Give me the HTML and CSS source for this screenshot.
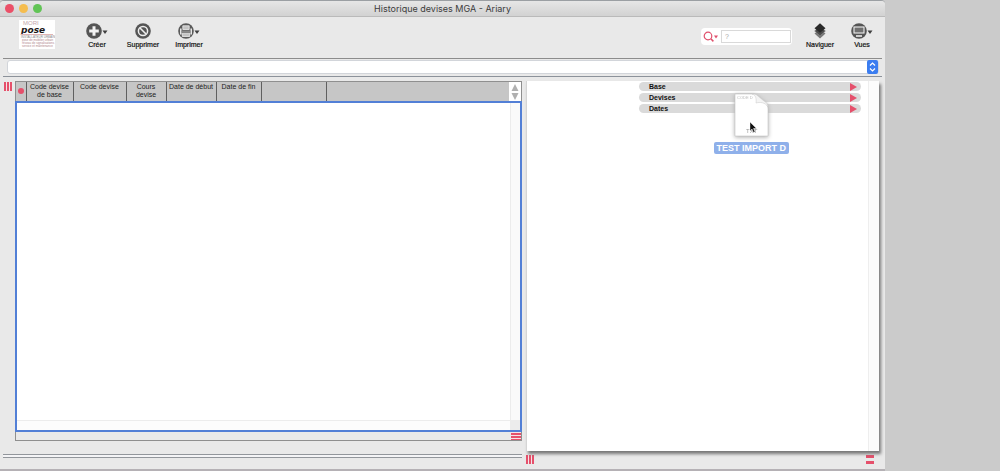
FILE: index.html
```
<!DOCTYPE html>
<html lang="fr">
<head>
<meta charset="utf-8">
<title>Historique devises MGA - Ariary</title>
<link rel="stylesheet" href="styles.css">
</head>
<body>
<main class="window">
  <header class="titlebar">
    <div class="lights">
      <button class="light close" aria-label="Fermer"></button>
      <button class="light minimize" aria-label="Réduire"></button>
      <button class="light maximize" aria-label="Agrandir"></button>
    </div>
    <h1 class="title">Historique devises MGA - Ariary</h1>
  </header>

  <nav class="toolbar">
    <div class="logo">
      <span class="logo-top">MORI</span>
      <span class="logo-name">pose</span>
      <span class="logo-tag">INSTALLATEUR URBAIN</span>
      <span class="logo-line">pose de mobilier urbain</span>
      <span class="logo-line">réseau de signalisations</span>
      <span class="logo-line">service et maintenance</span>
    </div>
    <div class="actions">
      <button class="tool">
        <svg width="24" height="18" viewBox="0 0 24 18"><circle cx="9" cy="9" r="7.8" fill="#555"/><path d="M9 4.200v9.600M4.200 9h9.600" stroke="#f2f2f2" stroke-width="3"/><path d="M17.500 8.500h5L20 12z" fill="#3f3f3f"/></svg>
        <span>Créer</span>
      </button>
      <button class="tool">
        <svg width="24" height="18" viewBox="0 0 24 18"><circle cx="12" cy="9" r="7.800" fill="#555"/><circle cx="12" cy="9" r="4.600" fill="none" stroke="#eee" stroke-width="1.500"/><path d="M9 6l6 6" stroke="#eee" stroke-width="1.600"/></svg>
        <span>Supprimer</span>
      </button>
      <button class="tool">
        <svg width="24" height="18" viewBox="0 0 24 18"><circle cx="9" cy="9" r="7.800" fill="#5a5a5a"/><path d="M5.800 3.800h6.400v3.700H5.800zM5.300 11.200h7.400v3.300H5.300z" fill="#c4c4c4" stroke="#eee" stroke-width=".8"/><path d="M3.800 6.500v6M14.200 6.500v6" stroke="#eee" stroke-width="1.500"/><path d="M4.500 8.500h9v2.200h-9z" fill="#888"/><path d="M17.500 8.500h5L20 12z" fill="#3f3f3f"/></svg>
        <span>Imprimer</span>
      </button>
    </div>
    <div class="search">
      <svg width="16" height="12" viewBox="0 0 16 12"><circle cx="5" cy="5" r="3.800" fill="none" stroke="#e0506c" stroke-width="1.200"/><path d="M7.800 7.800l2.600 2.600" stroke="#e0506c" stroke-width="1.500"/><path d="M11 4.500h4L13 7.500z" fill="#e0506c"/></svg>
      <input class="search-input" type="search" placeholder="?" aria-label="Rechercher">
    </div>
    <div class="actions">
      <button class="tool">
        <svg width="24" height="18" viewBox="0 0 24 18"><path d="M12 7.500l5.500 4L12 16.500l-5.500-5z" fill="#777"/><path d="M12 4.500l5.500 4.500-5.500 4.800L6.500 9z" fill="#4c4c4c" stroke="#999" stroke-width=".4"/><path d="M12 1.200l5.500 5-5.500 4.600-5.500-4.600z" fill="#292929"/></svg>
        <span>Naviguer</span>
      </button>
      <button class="tool">
        <svg width="24" height="18" viewBox="0 0 24 18"><circle cx="9" cy="9" r="7.800" fill="#555"/><rect x="4" y="5" width="10" height="6" fill="#707070" stroke="#eee" stroke-width="1.100"/><path d="M6 14h6" stroke="#eee" stroke-width="1.600"/><path d="M17.500 8.500h5L20 12z" fill="#3f3f3f"/></svg>
        <span>Vues</span>
      </button>
    </div>
  </nav>

  <div class="picker">
    <select class="picker-select" aria-label="Sélection"><option></option></select>
    <svg class="picker-icon" width="11" height="14" viewBox="0 0 11 14"><rect width="11" height="14" rx="2" fill="#3b7df0"/><path d="M3 5.500L5.500 3 8 5.500M3 8.500L5.500 11 8 8.500" fill="none" stroke="#fff" stroke-width="1.200"/></svg>
  </div>

  <div class="panes">
    <span class="grip"></span>
    <section class="list">
      <div class="list-box">
        <div class="list-head">
          <table class="columns">
            <thead>
              <tr>
                <th class="w-mark"><span class="dot"></span></th>
                <th class="w-base">Code devise de base</th>
                <th class="w-code">Code devise</th>
                <th class="w-rate">Cours devise</th>
                <th class="w-start">Date de début</th>
                <th class="w-end">Date de fin</th>
                <th class="w-extra"></th>
              </tr>
            </thead>
          </table>
          <svg class="sorter" width="12" height="19" viewBox="0 0 12 19"><rect width="12" height="19" fill="#fff"/><path d="M6 2l3.500 7h-7zM6 18l3.500-7h-7z" fill="#b0b0b0"/></svg>
        </div>
        <div class="list-body"><div class="rows"></div><div class="track"></div><div class="track-h"></div><div class="corner"></div></div>
        <div class="list-foot"><span class="grip-h"></span></div>
      </div>
      <div class="rules"></div>
    </section>
    <section class="detail">
      <div class="card">
        <div class="groups">
          <button class="group"><span>Base</span><i class="arrow"></i></button>
          <button class="group"><span>Devises</span><i class="arrow"></i></button>
          <button class="group"><span>Dates</span><i class="arrow"></i></button>
        </div>
        <div class="card-track"></div>
        <div class="dragged">
          <svg width="42" height="50" viewBox="0 0 42 50">
            <path class="sheet" d="M5 3h17c5 0 6 3 7 5l5 3c3 2 4 4 4 7v27H5z"/>
            <path d="M22 3c4 1 4.500 5 4 9 4-1 9-1 12 4 0-3-2-5-4-6L28 5c-2-2-4-2-6-2z" fill="#f4f4f4" stroke="#c8c8c8" stroke-width=".5"/>
            <text x="7" y="8" class="sheet-note">CODE D</text>
            <text x="16" y="42" class="sheet-type">TXT</text>
            <path d="M20 31v9l2-2 1.500 3.500 1.500-.8-1.500-3.200h3z" fill="#111" stroke="#fff" stroke-width=".4"/>
          </svg>
          <span class="dragged-name">TEST IMPORT D</span>
        </div>
      </div>
      <div class="detail-foot"><span class="grip-foot"></span><span class="bars"></span></div>
    </section>
  </div>
</main>
</body>
</html>
```
FILE: styles.css
```
* { box-sizing: border-box; }
body {
  margin: 0;
  min-height: 100vh;
  display: flex;
  padding: 0 115px 0 0;
  background: #cbcbcb;
  font-family: "Liberation Sans", Arial, sans-serif;
  font-size: 7px;
  color: #222;
}
button { border: 0; padding: 0; background: none; font: inherit; color: inherit; }
.window {
  flex: 1;
  display: flex;
  flex-direction: column;
  background: #e9e9e9;
  border-top: 1px solid #9b9fa3;
  border-bottom: 2px solid #b5b1b5;
  border-radius: 4px 4px 0 0;
}
.titlebar {
  position: relative;
  height: 16px;
  display: flex;
  align-items: center;
  justify-content: center;
  background: linear-gradient(#e6e6e6, #d2d2d2);
  border-bottom: 1px solid #bababa;
  border-radius: 4px 4px 0 0;
}
.lights { position: absolute; left: 5px; display: flex; gap: 5px; }
.light { width: 9px; height: 9px; border-radius: 50%; }
.close { background: #eb5068; }
.minimize { background: #f5bd4f; }
.maximize { background: #61c455; }
.title { margin: 0; font: 400 9px/15px Inter, "Liberation Sans", sans-serif; color: #3c3c3c; }

.toolbar {
  height: 41px;
  display: flex;
  align-items: flex-start;
  padding: 3px 0 0 19px;
}
.logo {
  width: 36px;
  height: 29px;
  display: flex;
  flex-direction: column;
  background: #fff;
  padding: 1px 2px;
  overflow: hidden;
  white-space: nowrap;
}
.logo-top { padding-left: 2px; font-size: 6px; line-height: 5px; color: #c4a8ab; }
.logo-name { font: italic 700 9px/8px "DejaVu Sans", sans-serif; color: #1c1718; }
.logo-tag { border-top: 1px solid #dfb5b5; font-size: 3px; line-height: 4px; color: #888; }
.logo-line { padding-left: 1px; font-size: 3px; line-height: 3px; color: #b08488; }
.actions { display: flex; }
.logo + .actions { margin-left: 19px; }
.tool {
  width: 46px;
  margin-top: 2px;
  display: flex;
  flex-direction: column;
  align-items: center;
  gap: 1px;
  color: #111;
  -webkit-text-stroke: 0.2px #111;
}
.tool svg { display: block; }
.tool span { line-height: 8px; }
.search {
  margin: 8px 7px 0 auto;
  display: flex;
  align-items: center;
  gap: 2px;
  height: 17px;
  padding: 0 1px 0 2px;
  background: #fff;
  border-radius: 4px;
}
.search-input {
  width: 70px;
  height: 13px;
  padding: 0 3px;
  border: 1px solid #d9d9d9;
  font: 7px "Liberation Sans", sans-serif;
}
.search-input::placeholder { color: #aaa; }
.search + .actions .tool { width: 42px; }
.search + .actions { margin-right: 2px; }

.picker {
  position: relative;
  display: flex;
  height: 19px;
  margin: 0 3px;
  padding: 1px 3px 2px 4px;
  border-top: 1px solid #8c8c8c;
  border-bottom: 1px solid #8c929a;
}
.picker-select {
  flex: 1;
  appearance: none;
  background: #fff;
  border: 1px solid #d2d5da;
  border-radius: 3px;
}
.picker-icon { position: absolute; right: 4px; top: 1px; pointer-events: none; }

.panes {
  flex: 1;
  display: grid;
  grid-template-columns: 12px 507fr 353fr;
  column-gap: 4px;
  padding: 4px 6px 0 0;
}
.grip, .grip-foot {
  width: 8px;
  height: 9px;
  background: repeating-linear-gradient(90deg, #e5506b 0 2px, #f3e5e7 2px 3px);
}
.grip { margin: 1px 0 0 4px; }
.list { display: flex; flex-direction: column; margin-left: -1px; }
.list-box {
  flex: 1;
  display: flex;
  flex-direction: column;
  border: 1px solid #8f8f8f;
}
.list-head { height: 19px; display: flex; justify-content: space-between; background: #c6c6c6; }
.columns { table-layout: fixed; width: 310px; height: 19px; border-collapse: collapse; }
.columns th {
  padding: 1px 0 0;
  vertical-align: top;
  font-weight: 400;
  line-height: 8px;
  border-right: 1px solid #606060;
}
.w-mark { width: 10px; }
.w-base { width: 47px; }
.w-code { width: 53px; }
.w-rate { width: 40px; }
.w-start { width: 50px; }
.w-end { width: 45px; }
.w-extra { width: 65px; }
.columns .w-base { padding: 1px 3px 0; }
.columns .w-rate { padding: 1px 6px 0; }
.columns .w-start { white-space: nowrap; }
.dot { display: block; width: 6px; height: 6px; margin: 5px auto 0 2px; border-radius: 50%; background: #e5506b; }
.list-body {
  flex: 1;
  display: grid;
  grid-template: 1fr 9px / 1fr 9px;
  gap: 1px;
  margin: 0 -1px;
  border: 2px solid #527fd6;
  background: #ececec;
}
.rows { background: #fff; }
.track { background: #fafafa; }
.track-h { background: #fcfcfc; }
.list-foot { height: 8px; display: flex; justify-content: flex-end; }
.grip-h { width: 10px; background: repeating-linear-gradient(#f3e5e7 0 1px, #e5506b 1px 3px); }
.rules { height: 4px; margin: 13px 0 11px -12px; border: solid #92969b; border-width: 1px 0; background: #f4f4f6; }
.detail { display: flex; flex-direction: column; }
.card {
  position: relative;
  flex: 1;
  display: flex;
  justify-content: flex-end;
  background: #fff;
  border-left: 1px solid #d5d5d5;
  box-shadow: 2px 3px 3px #777;
}
.groups { width: 222px; margin-right: 7px; padding-top: 1px; display: flex; flex-direction: column; gap: 2px; }
.group {
  height: 9px;
  padding: 0 4px 0 10px;
  display: flex;
  align-items: center;
  justify-content: space-between;
  background: #dadada;
  border-radius: 5px;
  font-weight: 700;
  color: #111;
}
.arrow { border: solid transparent; border-width: 4px 0 4px 7px; border-left-color: #e5506b; }
.card-track { width: 11px; border-left: 1px solid #eee; background: #fcfcfc; }
.dragged {
  position: absolute;
  top: 10px;
  right: 90px;
  display: flex;
  flex-direction: column;
  align-items: center;
  gap: 1px;
}
.dragged svg { filter: drop-shadow(0 1px 2px #aaa); }
.sheet { fill: #fff; stroke: #c4c4c4; stroke-width: 0.6px; }
.sheet-note { font-size: 4px; fill: #bbb; }
.sheet-type { font-size: 6px; fill: #999; }
.dragged-name {
  padding: 0 3px;
  border-radius: 2px;
  background: #8fb0ea;
  color: #fff;
  font: 700 9px/12px "Liberation Sans", sans-serif;
}
.detail-foot { display: flex; justify-content: space-between; height: 18px; padding: 4px 5px 0 0; }
.bars { width: 8px; height: 9px; border: solid #e5506b; border-width: 3px 0; }
```
